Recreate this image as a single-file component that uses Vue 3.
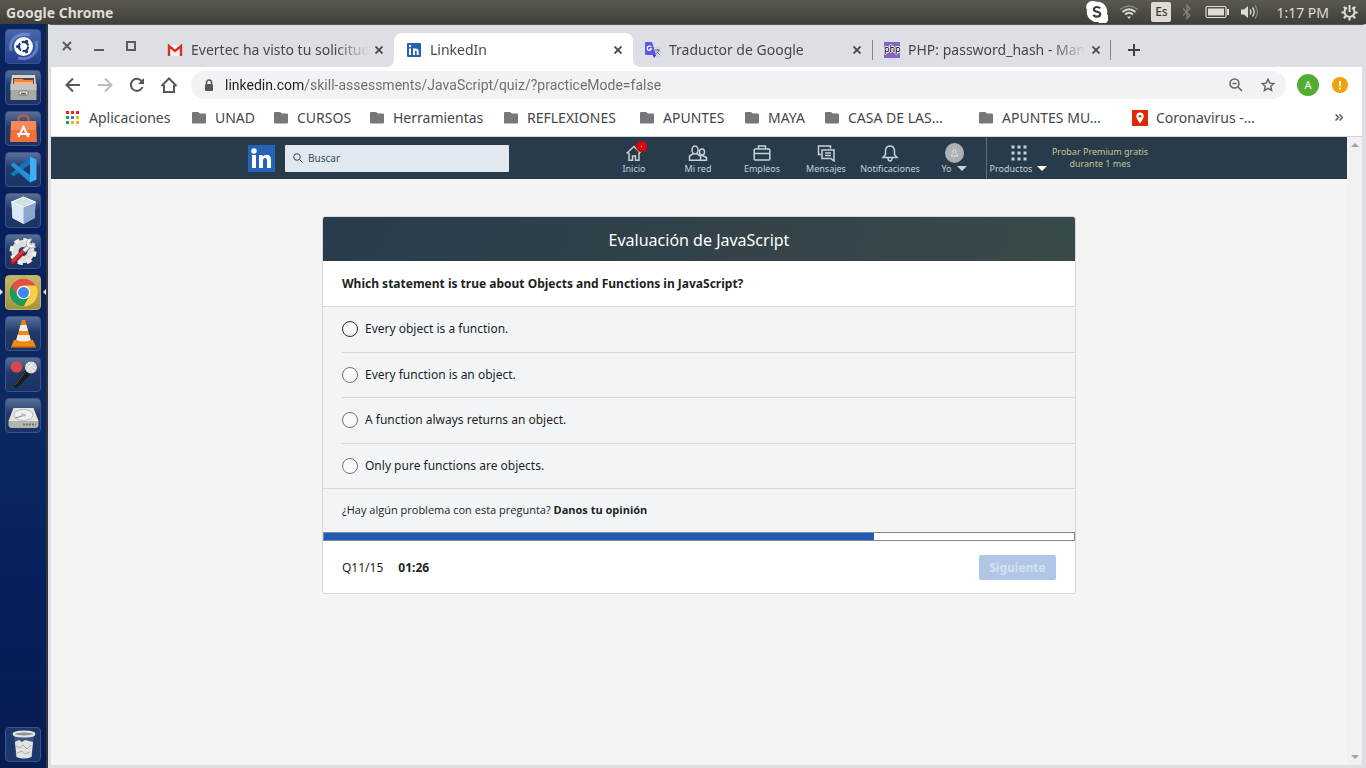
<script setup>
import { ref } from 'vue'

const tabs = [
  { title: 'Evertec ha visto tu solicitud', icon: 'gmail' },
  { title: 'LinkedIn', icon: 'linkedin', active: true },
  { title: 'Traductor de Google', icon: 'translate' },
  { title: 'PHP: password_hash - Manual', icon: 'php' }
]

const bookmarks = [
  { label: 'Aplicaciones', icon: 'apps' },
  { label: 'UNAD' },
  { label: 'CURSOS' },
  { label: 'Herramientas' },
  { label: 'REFLEXIONES' },
  { label: 'APUNTES' },
  { label: 'MAYA' },
  { label: 'CASA DE LAS…' },
  { label: 'APUNTES MU…' },
  { label: 'Coronavirus -…', icon: 'pin' }
]

const options = [
  'Every object is a function.',
  'Every function is an object.',
  'A function always returns an object.',
  'Only pure functions are objects.'
]

const address = ref('linkedin.com/skill-assessments/JavaScript/quiz/?practiceMode=false')
const search = ref('')
const answer = ref(null)
const appDots = ['#f21d1d', '#f21d1d', '#f21d1d', '#12a15a', '#3b6ff0', '#f4b400', '#12a15a', '#f4b400', '#f4b400']
</script>

<template>
  <div class="desktop">
    <header class="panel">
      <span class="panel-title">Google Chrome</span>
      <div class="indicators">
        <svg class="ind-skype" width="22" height="22" viewBox="0 0 22 22">
          <path d="M6 0a6 6 0 0 1 4 .8A10 10 0 0 1 21 13a6 6 0 0 1-9 8A10 10 0 0 1 1 9a6 6 0 0 1 5-9z" fill="#fff" />
          <path d="M14.2 7.4c-.8-1-1.900-1.400-3.200-1.400-1.800 0-3.100.9-3.100 2.400 0 3.100 6.300 1.500 6.300 4.700 0 1.600-1.400 2.600-3.300 2.600-1.500 0-2.800-.6-3.500-1.800" fill="none" stroke="#3c3b37" stroke-width="2.200" />
        </svg>
        <svg class="ind-wifi" width="20" height="16" viewBox="0 0 20 16" fill="none" stroke="#dfdbd2">
          <path d="M1 5.500Q10-1.500 19 5.500" stroke="#8b877e" stroke-width="1.500" />
          <path d="M3.500 8Q10 2.500 16.500 8M6 10.500Q10 7 14 10.500" stroke-width="1.700" />
          <path d="M8 12.500h4l-2 2.500z" fill="#dfdbd2" stroke="none" />
        </svg>
        <span class="ind-lang">Es</span>
        <svg class="ind-bt" width="10" height="16" viewBox="0 0 10 16" fill="none" stroke="#85827a" stroke-width="1.300"><path d="M1 4.500l7 7L5 14.500v-13l3 3-7 7" /></svg>
        <svg class="ind-batt" width="24" height="14" viewBox="0 0 24 14"><rect x="1" y="1.500" width="20" height="11" rx="1.500" fill="none" stroke="#dfdbd2" stroke-width="1.200" /><rect x="3" y="3.500" width="16" height="7" fill="#dfdbd2" /><path d="M22 4h2v6h-2z" fill="#dfdbd2" /></svg>
        <svg class="ind-vol" width="20" height="16" viewBox="0 0 20 16" fill="none" stroke="#dfdbd2" stroke-width="1.300"><path d="M1 5.500h3l4-3.500v12l-4-3.500H1z" fill="#dfdbd2" stroke="none" /><path d="M10 5.500q2 2.500 0 5M12.500 3.500q3.500 4.500 0 9" /><path d="M15 1.500q5 6.500 0 13" stroke="#85827a" /></svg>
        <time class="clock">1:17 PM</time>
        <svg class="ind-gear" width="17" height="17" viewBox="0 0 17 17" fill="none" stroke="#dfdbd2"><path d="M5.800 3.700a5 5 0 1 0 5.400 0" stroke-width="2" /><path d="M8.500 1v7" stroke-width="2" /><path d="M3.500 8.500H.5M16.500 8.500h-3M5 12l-2.200 2.200M12 12l2.200 2.200M4.500 4.500L2.800 2.800M12.500 4.500l1.700-1.700M8.500 13.500v3" stroke-width="2.200" /></svg>
      </div>
    </header>

    <div class="workspace">
      <nav class="launcher" aria-label="Lanzador">
        <button class="tile tile-dash" aria-label="Inicio de Ubuntu">
          <svg viewBox="0 0 35 35"><path d="M5 22C2 10 13 3 24 6M30 12c4 12-7 20-18 17" fill="none" stroke="#8fa5dd" stroke-width="3" opacity=".55" /><circle cx="17.500" cy="17.500" r="9.500" fill="#fff" /><circle cx="17.500" cy="17.500" r="4.600" fill="none" stroke="#1e3977" stroke-width="2.200" stroke-dasharray="8 1.630" /><circle cx="11.500" cy="17.500" r="1.600" fill="#1e3977" /><circle cx="20.600" cy="12.300" r="1.600" fill="#1e3977" /><circle cx="20.600" cy="22.700" r="1.600" fill="#1e3977" /></svg>
        </button>
        <button class="tile" aria-label="Archivos">
          <svg viewBox="0 0 35 35"><path d="M6 5h23l1 9H5z" fill="#d7d5d0" /><path d="M7 8h21v6H7z" fill="#554639" /><path d="M8 9h9l1 1h9v4H8z" fill="#f0863f" /><path d="M8 12h19v2H8z" fill="#f7b383" /><path d="M4.500 14h26v16h-26z" fill="#aaa9a5" /><path d="M4.500 14h26v6h-26z" fill="#c4c3bf" /><rect x="13" y="21" width="9" height="4" rx="1" fill="#eee" stroke="#777" /><path d="M15 23.500h5" stroke="#555" stroke-width="1.500" /></svg>
        </button>
        <button class="tile" aria-label="Software de Ubuntu">
          <svg viewBox="0 0 35 35"><path d="M12.500 12V8q0-3.500 5-3.500t5 3.500v4" fill="none" stroke="#c95f38" stroke-width="2" /><path d="M5 10h25l1 21H4z" fill="#ef7138" /><path d="M5 10h25v9H5z" fill="#f5895a" /><path d="M12.500 26l5-10 5 10M11 23h3M21 23h3M15 23h5" fill="none" stroke="#fff" stroke-width="2" /></svg>
        </button>
        <button class="tile" aria-label="Visual Studio Code">
          <svg viewBox="0 0 35 35"><path d="M24 4.500V12L7.500 24.500 4.500 22z" fill="#1674b8" /><path d="M4.500 13l3-2.500L24 23v7.500z" fill="#218fd8" /><path d="M24 4.500l6.500 3v20L24 30.500z" fill="#42aef0" /></svg>
        </button>
        <button class="tile" aria-label="VirtualBox">
          <svg viewBox="0 0 35 35"><path d="M17.500 4l12 5-1 16-11 6-11-6-1-16z" fill="#edf6fa" /><path d="M5.500 9l12 5v17l-11-6z" fill="#dbe7f6" /><path d="M29.500 9l-12 5v17l11-6z" fill="#8da6cd" /><path d="M5.500 9l12-5 12 5-12 5z" fill="#cfe3e3" stroke="#f8ffff" /></svg>
        </button>
        <button class="tile" aria-label="Configuración">
          <svg viewBox="0 0 35 35"><circle cx="17" cy="17.500" r="8" fill="none" stroke="#dededc" stroke-width="7" /><circle cx="17" cy="17.500" r="11.500" fill="none" stroke="#eee" stroke-width="4" stroke-dasharray="5 4.030" /><path d="M7 28l13-13" stroke="#a51820" stroke-width="5" stroke-linecap="round" /><path d="M7 27l12-12" stroke="#d8383c" stroke-width="3" stroke-linecap="round" /><path d="M18 17l5-5" stroke="#888" stroke-width="5" /><path d="M18 17l5-5" stroke="#f4f4f4" stroke-width="3" /><path d="M26 5q-5-1-5.500 4t5 5q4-1 3.500-5l-4 2-1.500-2z" fill="#f4f4f4" stroke="#999" stroke-width=".7" /></svg>
        </button>
        <button class="tile tile-active" aria-label="Google Chrome">
          <svg viewBox="0 0 35 35"><circle cx="17.500" cy="17.500" r="14" fill="#ffce44" /><path d="M17.500 17.500L5.380 10.500a14 14 0 0 0 12.120 21l6-10.500z" fill="#1c9b58" /><path d="M17.500 17.500L5.380 10.500A14 14 0 0 1 29.620 10.500H17.500z" fill="#de5145" /><path d="M5.400 10.500L11.500 21l6-3.500V10.500z" fill="#de5145" /><circle cx="17.500" cy="17.500" r="6.800" fill="#fff" /><circle cx="17.500" cy="17.500" r="5.500" fill="#4285f4" /></svg>
        </button>
        <button class="tile" aria-label="VLC">
          <svg viewBox="0 0 35 35"><path d="M8 24h19l3 7H5z" fill="#f08b16" /><path d="M16 4h3l6.500 22q-8 3-16 0z" fill="#f28511" /><path d="M14.500 9h6l1.500 6h-9zM11.600 19h11.800l1.200 5q-7 3-14.200 0z" fill="#eee" /><path d="M5 31h25" stroke="#c36708" stroke-width="1.500" /></svg>
        </button>
        <button class="tile" aria-label="Kazam">
          <svg viewBox="0 0 35 35"><path d="M19 13l6 4-12 12q-4 3-5.500-.5z" fill="#1c1c1d" /><path d="M19 15L9 28" stroke="#555" /><circle cx="10.500" cy="10" r="5.800" fill="#d8474b" /><circle cx="25" cy="10.500" r="6" fill="#d6d6d6" /><path d="M20 7l8 8M22 5l8 7M21 14l7-9" stroke="#f7f7f7" /></svg>
        </button>
        <button class="tile" aria-label="Disco">
          <svg viewBox="0 0 35 35"><path d="M7.500 10h20l5 13H2.500z" fill="#e3e3e1" /><path d="M2.500 23h30v5l-2 2h-26l-2-2z" fill="#b4b4b1" /><ellipse cx="17.500" cy="17" rx="9.500" ry="5.500" fill="#f0f0f0" stroke="#bdbdbb" /><ellipse cx="17.500" cy="17" rx="2.500" ry="1.500" fill="#bbb" /><path d="M9 20l7-2" stroke="#888" /><path d="M17 26.500h13" stroke="#777" stroke-width="2" stroke-dasharray="2 1" /></svg>
        </button>
        <button class="tile tile-trash" aria-label="Papelera">
          <svg viewBox="0 0 35 35"><path d="M8 8h20l-2 22H10z" fill="#8fa0bd" opacity=".3" /><path d="M9 15l4-2 3 2 3-2 4 1 4 1-1.500 15q-8 3-15 0z" fill="#e3e3df" /><path d="M10 19l4 2 3-3 4 4 4-4M11 26l5-2 3 3 5-2" fill="none" stroke="#aaa" /><ellipse cx="18" cy="7" rx="10.500" ry="2.500" fill="#8a909c" stroke="#e6e6e0" stroke-width="2" /></svg>
        </button>
      </nav>

      <div class="window">
        <div class="tabstrip">
          <div class="window-controls">
            <button aria-label="Cerrar ventana"><svg width="10" height="10" viewBox="0 0 10 10"><path d="M1 1l8 8M9 1L1 9" stroke="#5b5c60" stroke-width="2" /></svg></button>
            <button aria-label="Minimizar"><svg width="10" height="10" viewBox="0 0 10 10"><path d="M0 9h10" stroke="#5b5c60" stroke-width="2" /></svg></button>
            <button aria-label="Maximizar"><svg width="10" height="10" viewBox="0 0 10 10"><path d="M1 1h8v8H1z" fill="none" stroke="#5b5c60" stroke-width="2" /></svg></button>
          </div>
          <div v-for="tab in tabs" :key="tab.icon" class="tab" :class="{ active: tab.active, divided: tab.icon === 'translate' || tab.icon === 'php' }">
            <svg v-if="tab.icon === 'gmail'" width="16" height="16" viewBox="0 0 16 16"><path d="M2 3h12v11H2z" fill="#f2f2f2" /><path d="M2 14V4l6 5 6-5v10" fill="none" stroke="#d93025" stroke-width="2.400" /></svg>
            <svg v-else-if="tab.icon === 'linkedin'" width="16" height="16" viewBox="0 0 16 16"><rect x="1" y="1" width="14" height="14" rx="1" fill="#2460b4" /><path d="M4 6.500V13M8 13V6.500M8 9.500q0-2 1.800-2T11.700 9.500V13" fill="none" stroke="#fff" stroke-width="2" /><circle cx="4" cy="4" r="1.200" fill="#fff" /></svg>
            <svg v-else-if="tab.icon === 'translate'" width="16" height="16" viewBox="0 0 16 16"><path d="M7 5h8q1 0 1 1v9q0 1-1 1H9z" fill="#d4d7de" /><path d="M1 0h6l4 13H1q-1 0-1-1V1q0-1 1-1z" fill="#5b57f5" /><path d="M8 13h3l-2 3z" fill="#4a12b8" /><path d="M6.200 5A2.200 2.200 0 1 0 6.500 6.800H4.500" fill="none" stroke="#fff" stroke-width="1.200" /><path d="M10 8h5M12.500 7v1M14 8q-1 3-3.500 4.500M11.500 9.500l3 3" fill="none" stroke="#66768b" /></svg>
            <span v-else class="php-icon">php</span>
            <span class="tab-title">{{ tab.title }}</span>
            <button class="tab-close" aria-label="Cerrar pestaña"><svg width="8" height="8" viewBox="0 0 8 8"><path d="M.5.5l7 7M7.500.5l-7 7" stroke="#45474b" stroke-width="1.800" /></svg></button>
          </div>
          <button class="new-tab" aria-label="Nueva pestaña"><svg width="12" height="12" viewBox="0 0 12 12"><path d="M6 0v12M0 6h12" stroke="#3c4043" stroke-width="2" /></svg></button>
        </div>

        <div class="toolbar">
          <button aria-label="Atrás"><svg width="16" height="16" viewBox="0 0 16 16" fill="none" stroke="#55585c" stroke-width="2"><path d="M15 8H2M8 1.500L1.500 8 8 14.500" /></svg></button>
          <button aria-label="Adelante"><svg width="16" height="16" viewBox="0 0 16 16" fill="none" stroke="#b9bbbe" stroke-width="2"><path d="M1 8h13M8 1.500L14.500 8 8 14.500" /></svg></button>
          <button aria-label="Recargar"><svg width="16" height="16" viewBox="0 0 16 16" fill="none" stroke="#55585c" stroke-width="2"><path d="M13.500 10A6 6 0 1 1 12.500 4" /><path d="M15 1v6H9z" fill="#55585c" stroke="none" /></svg></button>
          <button aria-label="Página principal"><svg width="18" height="16" viewBox="0 0 18 16" fill="none" stroke="#55585c" stroke-width="2"><path d="M1.500 9L9 1.500 16.500 9M4 8v7h10V8" /></svg></button>
          <div class="omnibox">
            <svg width="10" height="13" viewBox="0 0 10 13"><rect x="1" y="5" width="8" height="7" rx="1" fill="#55585c" /><path d="M2.500 5V3.500a2.500 2.500 0 0 1 5 0V5" fill="none" stroke="#55585c" stroke-width="1.500" /></svg>
            <input v-model="address" type="text" aria-label="Dirección" />
            <svg width="14" height="14" viewBox="0 0 14 14" fill="none" stroke="#5f6368" stroke-width="1.500"><circle cx="5.500" cy="5.500" r="4.500" /><path d="M9 9l4 4M3.500 5.500h4" /></svg>
            <svg class="star" width="14" height="14" viewBox="0 0 14 14" fill="none" stroke="#5f6368" stroke-width="1.400"><path d="M7 1.200l1.700 3.900 4.300.4-3.200 2.800.9 4.200L7 10.300l-3.700 2.200.9-4.200L1 5.500l4.300-.4z" /></svg>
          </div>
          <button class="avatar" aria-label="Perfil A">A</button>
          <button class="alert" aria-label="Actualizar"><svg width="16" height="16" viewBox="0 0 16 16"><circle cx="8" cy="8" r="8" fill="#f5a008" /><path d="M8 4v5M8 10.500v2" stroke="#fff" stroke-width="2" /></svg></button>
        </div>

        <nav class="bookmarks" aria-label="Marcadores">
          <a v-for="mark in bookmarks" :key="mark.label" href="#">
            <svg v-if="mark.icon === 'apps'" width="14" height="14" viewBox="0 0 14 14"><rect v-for="(color, i) in appDots" :key="i" :x="(i % 3) * 5" :y="Math.floor(i / 3) * 5" width="3" height="3" :fill="color" /></svg>
            <svg v-else-if="mark.icon === 'pin'" width="16" height="16" viewBox="0 0 16 16"><rect width="16" height="16" fill="#dc2a08" /><path d="M8 2.500a3.700 3.700 0 0 0-3.700 3.700C4.300 8.500 8 13.500 8 13.500s3.700-5 3.700-7.300A3.700 3.700 0 0 0 8 2.500z" fill="#fff" /><circle cx="8" cy="6.200" r="1.300" fill="#dc2a08" /></svg>
            <svg v-else width="15" height="13" viewBox="0 0 15 13"><path d="M1 1h5l2 1.500h5q1 0 1 1v8q0 1-1 1H1q-1 0-1-1V2q0-1 1-1z" fill="#76777b" /></svg>
            <span>{{ mark.label }}</span>
          </a>
          <button class="more" aria-label="Más marcadores"><svg width="8" height="7" viewBox="0 0 8 7" fill="none" stroke="#55585c" stroke-width="1.500"><path d="M.5.5l3 3-3 3M4.500.5l3 3-3 3" /></svg></button>
        </nav>

        <div class="viewport">
          <div class="page">
            <header class="nav">
              <div class="nav-inner">
                <a class="logo" href="#" aria-label="LinkedIn"><svg width="27" height="27" viewBox="0 0 27 27"><rect width="27" height="27" fill="#2563b8" /><circle cx="6" cy="6" r="2.700" fill="#fff" /><path d="M4 10h4v13H4zM11 10h3.800v1.800Q16 9.700 18.600 9.700q4.400 0 4.400 5.300v8h-4v-7q0-3-1.800-3-2.200 0-2.200 3v7h-4z" fill="#fff" /></svg></a>
                <label class="search">
                  <svg width="10" height="10" viewBox="0 0 10 10" fill="none" stroke="#33475a"><circle cx="4" cy="4" r="3.300" /><path d="M6.500 6.500l3 3" /></svg>
                  <input v-model="search" type="text" placeholder="Buscar" aria-label="Buscar" />
                </label>
                <nav class="nav-items" aria-label="Principal">
                  <a href="#"><svg viewBox="0 0 18 18"><path d="M1.500 9.500L7.500 3.800M4 8.500v7.800h3.500V12h3v4.300H14V8.500M7.500 3.800L9 2.500l6.500 6.500" /></svg><span>Inicio</span><i class="badge"></i></a>
                  <a href="#"><svg class="wide" viewBox="0 0 20 18"><ellipse cx="7" cy="6" rx="3" ry="4" /><path d="M5.500 9.500L1.500 12v4.300h11V12l-4-2.500" /><ellipse cx="14" cy="8" rx="2.500" ry="3" /><path d="M13 11l5.500 2.500v2.800h-6" /></svg><span>Mi red</span></a>
                  <a href="#"><svg viewBox="0 0 18 18"><rect x="1.200" y="5" width="15.600" height="11" rx="1" /><path d="M5.500 5V2h7v3M1 9.500h16" /></svg><span>Empleos</span></a>
                  <a href="#"><svg viewBox="0 0 18 18"><path d="M4 10.500H1.500V2h12v2.500M5 6h12v11l-3-2.500H5zM8 9h6M8 11.500h6" /></svg><span>Mensajes</span></a>
                  <a href="#"><svg viewBox="0 0 18 18"><path d="M2 13.500l2.500-3V6.700Q5 2 9 2t4.500 4.700v3.800l2.500 3zM7 14q0 3 2 3t2-3" /></svg><span>Notificaciones</span></a>
                  <a href="#"><svg class="me" viewBox="0 0 19 20"><ellipse cx="9.500" cy="10" rx="9.500" ry="10" /><path d="M6.500 13v-1.500L8.500 10Q7 6.500 9.500 6.500T10.500 10l2 1.500V13z" /></svg><span class="with-caret">Yo <b class="caret"></b></span></a>
                  <a href="#" class="products"><svg class="dots" viewBox="0 0 18 18"><path d="M1.500 1.500h3v3h-3zM7.500 1.500h3v3h-3zM13.500 1.500h3v3h-3zM1.500 7.500h3v3h-3zM7.500 7.500h3v3h-3zM13.500 7.500h3v3h-3zM1.500 13.500h3v3h-3zM7.500 13.500h3v3h-3zM13.500 13.500h3v3h-3z" /></svg><span class="with-caret">Productos <b class="caret bright"></b></span></a>
                </nav>
                <a class="premium" href="#">Probar Premium gratis durante 1 mes</a>
              </div>
            </header>

            <main class="card">
              <h1>Evaluación de JavaScript</h1>
              <form @submit.prevent>
                <h2 id="question">Which statement is true about Objects and Functions in JavaScript?</h2>
                <div class="options" role="radiogroup" aria-labelledby="question">
                  <label v-for="(option, i) in options" :key="option">
                    <input v-model="answer" type="radio" name="answer" :value="i" />
                    <span>{{ option }}</span>
                  </label>
                </div>
                <p class="feedback">¿Hay algún problema con esta pregunta? <a href="#">Danos tu opinión</a></p>
                <progress value="11" max="15" aria-label="Progreso"></progress>
                <div class="card-footer">
                  <span class="count">Q11/15</span>
                  <strong>01:26</strong>
                  <button type="submit" disabled>Siguiente</button>
                </div>
              </form>
            </main>
          </div>
          <div class="scrollbar"><i class="up"></i><i class="down"></i></div>
        </div>
      </div>
    </div>
  </div>
</template>

<style>
body {
  background: #0b2259;
}
</style>

<style scoped>
* {
  box-sizing: border-box;
}
button {
  border: 0;
  padding: 0;
  background: none;
  font: inherit;
  color: inherit;
  display: flex;
  align-items: center;
  justify-content: center;
}
a {
  color: inherit;
  text-decoration: none;
}
svg {
  display: block;
  flex: none;
}
.desktop {
  height: 100vh;
  display: flex;
  flex-direction: column;
  font-family: "Noto Sans", "Open Sans", sans-serif;
  overflow: hidden;
}
.panel {
  height: 24px;
  flex: none;
  display: flex;
  align-items: center;
  justify-content: space-between;
  padding: 0 8px 0 6px;
  background: linear-gradient(#5b594f, #3f3e39);
  color: #dfdbd2;
  font-size: 14px;
}
.panel-title {
  font-weight: 700;
}
.indicators {
  display: flex;
  align-items: center;
}
.ind-wifi { margin-left: 11px; }
.ind-lang {
  width: 20px;
  height: 20px;
  margin-left: 12px;
  border-radius: 2px;
  background: #dfdbd2;
  color: #3c3b37;
  font-size: 12px;
  font-weight: 500;
  line-height: 20px;
  text-align: center;
}
.ind-bt { margin-left: 11px; }
.ind-batt { margin-left: 13px; }
.ind-vol { margin-left: 11px; }
.clock { margin-left: 16px; }
.ind-gear { margin-left: 12px; }

.workspace {
  flex: 1;
  min-height: 0;
  display: flex;
}
.launcher {
  width: 48px;
  flex: none;
  display: flex;
  flex-direction: column;
  gap: 6px;
  padding: 5px 0 6px 5px;
  border-right: 2px solid #33343c;
  background: linear-gradient(#0b2560, #071f5c 30%, #0d2a62 50%, #06205d 75%, #081d50);
}
.tile {
  position: relative;
  width: 36px;
  height: 35px;
  flex: none;
  border: 1px solid #3d5384;
  border-radius: 4px;
  background: linear-gradient(#5a7099, #20396b 45%, #1a3467);
}
.tile svg {
  width: 35px;
  height: 35px;
}
.tile-dash { background: linear-gradient(#4a66b0, #213f92); }
.tile-active { background: linear-gradient(#c4b76c, #a4943f); border-color: #bcae62; }
.tile-active::before,
.tile-active::after {
  content: "";
  position: absolute;
  top: 13px;
  border: 3px solid transparent;
}
.tile-active::before { left: -6px; border-left-color: #e8e8e8; }
.tile-active::after { right: -6px; border-right-color: #e8e8e8; }
.tile-trash {
  margin-top: auto;
  background: #1c376c;
}

.window {
  flex: 1;
  min-width: 0;
  display: flex;
  flex-direction: column;
  border: solid #dedfe5;
  border-width: 1px 4px 3px 3px;
  border-top-color: #55545a;
  background: #fff;
}
.tabstrip {
  height: 42px;
  flex: none;
  display: flex;
  align-items: flex-end;
  background: #dedfe5;
  color: #45474b;
}
.window-controls {
  display: flex;
  margin-right: 8px;
  align-self: flex-start;
}
.window-controls button {
  width: 32px;
  height: 42px;
}
.tab {
  position: relative;
  width: 239px;
  height: 34px;
  display: flex;
  align-items: center;
  padding: 0 11px 0 12px;
}
.tab.active {
  background: #fff;
  border-radius: 8px 8px 0 0;
}
.tab.active::before,
.tab.active::after {
  content: "";
  position: absolute;
  bottom: 0;
  width: 8px;
  height: 8px;
}
.tab.active::before {
  left: -8px;
  background: radial-gradient(circle at 0 0, transparent 8px, #fff 8px);
}
.tab.active::after {
  right: -8px;
  background: radial-gradient(circle at 100% 0, transparent 8px, #fff 8px);
}
.tab.divided + .tab::before,
.tab:nth-last-child(2)::after {
  content: "";
  position: absolute;
  top: 7px;
  left: 0;
  width: 1px;
  height: 20px;
  background: #85868b;
}
.tab:nth-last-child(2)::after {
  left: auto;
  right: 0;
}
.php-icon {
  width: 16px;
  height: 16px;
  flex: none;
  background: #8463c4;
  color: #000;
  font-size: 9px;
  line-height: 14px;
  text-align: center;
  text-shadow: 1px 0 #fff, -1px 0 #fff, 0 1px #fff, 0 -1px #fff;
}
.tab-title {
  flex: 1;
  margin: 0 6px 0 8px;
  overflow: hidden;
  white-space: nowrap;
  font-size: 14px;
  line-height: 20px;
  mask-image: linear-gradient(90deg, #000 calc(100% - 34px), transparent);
}
.tab-close {
  width: 8px;
  height: 16px;
}
.new-tab {
  width: 46px;
  height: 34px;
}

.toolbar {
  height: 35px;
  flex: none;
  display: flex;
  align-items: center;
  padding-left: 6px;
}
.toolbar > button {
  width: 32px;
  height: 28px;
}
.omnibox {
  flex: 1;
  height: 28px;
  display: flex;
  align-items: center;
  margin: 1px 11px 0 6px;
  padding: 0 11px 0 13px;
  border-radius: 14px;
  background: #f1f2f4;
}
.omnibox input {
  flex: 1;
  min-width: 0;
  margin: 0 8px 0 11px;
  border: 0;
  padding: 0;
  outline: 0;
  color: transparent;
  background: linear-gradient(90deg, #202124 80px, #6a6c70 80px);
  background-clip: text;
  font: 14px/20px Roboto, sans-serif;
}
.star { margin-left: 18px; }
.toolbar > .avatar {
  width: 22px;
  height: 22px;
  margin-right: 13px;
  border-radius: 50%;
  background: #52ae32;
  color: #fff;
  font-size: 11px;
}
.toolbar > .alert {
  width: 16px;
  margin-right: 14px;
}

.bookmarks {
  height: 35px;
  flex: none;
  display: grid;
  grid-template-columns: 126px 82px 96px 134px 136px 105px 80px 154px 153px 1fr auto;
  align-items: center;
  padding: 0 19px 3px 15px;
  border-bottom: 1px solid #d3d4d7;
  color: #45474b;
  font-size: 14px;
  line-height: 20px;
}
.bookmarks a {
  display: flex;
  align-items: center;
  gap: 8px;
  white-space: nowrap;
}
.bookmarks a:first-child {
  gap: 9px;
}

.viewport {
  flex: 1;
  min-height: 0;
  display: flex;
  background: #f4f4f4;
}
.page {
  flex: 1;
  min-width: 0;
}
.scrollbar {
  width: 15px;
  display: flex;
  flex-direction: column;
  justify-content: space-between;
  align-items: center;
  padding: 6px 0;
  background: #f1f1f1;
}
.scrollbar i {
  border: 4px solid transparent;
}
.scrollbar .up { border-top-width: 0; border-bottom-color: #a3a3a3; }
.scrollbar .down { border-bottom-width: 0; border-top-color: #a3a3a3; }

.nav {
  background: #283b4b;
}
.nav-inner {
  max-width: 902px;
  height: 42px;
  margin: 0 auto;
  display: flex;
  align-items: center;
}
.search {
  width: 224px;
  height: 27px;
  margin-left: 10px;
  display: flex;
  align-items: center;
  gap: 5px;
  padding-left: 8px;
  border-radius: 1px;
  background: #e1e8f0;
}
.search input {
  flex: 1;
  min-width: 0;
  border: 0;
  padding: 0;
  outline: 0;
  background: none;
  font: 10px/16px "Noto Sans", sans-serif;
}
.search input::placeholder {
  color: #3a4c5d;
}
.nav-items {
  display: flex;
  margin-left: auto;
  height: 42px;
}
.nav-items a {
  position: relative;
  width: 64px;
  display: flex;
  flex-direction: column;
  align-items: center;
  padding-top: 7px;
  color: #c7d1d8;
  font-size: 9px;
  line-height: 13px;
  white-space: nowrap;
}
.nav-items svg {
  width: 18px;
  height: 18px;
  fill: none;
  stroke: #c7d1d8;
  stroke-width: 1.5px;
}
.nav-items .wide { width: 20px; }
.nav-items .me {
  width: 19px;
  height: 20px;
  margin: -1px 0;
  fill: #aeb1b4;
  stroke: none;
}
.me path {
  stroke: #dfe1e2;
  stroke-width: 1px;
}
.nav-items .dots {
  fill: #c7d1d8;
  stroke: none;
}
.nav-items .products {
  border-left: 1px solid #5e6e7b;
}
.badge {
  position: absolute;
  top: 4px;
  left: 34px;
  width: 11px;
  height: 11px;
  border: 5px solid #d50a0a;
  border-radius: 50%;
  background: #fff;
}
.with-caret {
  display: flex;
  align-items: center;
  gap: 5px;
}
.caret {
  border: 5px solid transparent;
  border-top-color: #c7d1d8;
  border-bottom-width: 0;
}
.bright { border-top-color: #fff; }
.premium {
  width: 100px;
  color: #c3c58e;
  font-size: 9px;
  line-height: 12px;
  text-align: center;
}

.card {
  max-width: 754px;
  margin: 37px auto 0;
  border: 1px solid #d6d8da;
  border-radius: 3px;
  overflow: hidden;
  background: #fff;
  color: #1d1f21;
}
h1 {
  margin: 0;
  padding: 12px 0 10px;
  background: linear-gradient(110deg, #2a3c4c, #324249 50%, #394a4a);
  color: #fff;
  font-size: 16px;
  font-weight: 400;
  line-height: 22px;
  text-align: center;
}
h2 {
  margin: 0;
  padding: 13px 19px 12px;
  font-size: 12px;
  font-weight: 700;
  line-height: 20px;
}
.options {
  min-height: 183px;
  display: flex;
  flex-direction: column;
  padding-left: 19px;
  border: solid #d6dadd;
  border-width: 1px 0;
  background: #f2f5f8;
}
.options label {
  flex: 1;
  display: flex;
  align-items: center;
  gap: 7px;
  font-size: 12px;
  line-height: 20px;
}
.options label + label {
  border-top: 1px solid #d6dadd;
}
.options input {
  appearance: none;
  width: 16px;
  height: 16px;
  margin: 0;
  border: 1px solid #707376;
  border-radius: 50%;
  background: #f7f9fa;
}
.options label:first-child input {
  border-color: #292b2d;
}
.options input:checked {
  border: 5px solid #205cb4;
}
.feedback {
  margin: 0;
  padding: 13px 19px 14px;
  background: #f2f5f8;
  font: 11px/16px "Open Sans", "Noto Sans", sans-serif;
}
.feedback a {
  font-weight: 700;
}
progress {
  appearance: none;
  display: block;
  width: 100%;
  height: 9px;
  border: 1px solid #898989;
  background: #fff;
}
progress::-webkit-progress-bar { background: #fff; }
progress::-webkit-progress-value { background: #205cb4; }
.card-footer {
  display: flex;
  align-items: center;
  gap: 15px;
  padding: 14px 19px 13px;
  font-size: 12px;
}
.card-footer button {
  margin-left: auto;
  width: 77px;
  height: 25px;
  border-radius: 2px;
  background: #b1c6e6;
  color: #d4e0f2;
  font-weight: 700;
}
</style>
